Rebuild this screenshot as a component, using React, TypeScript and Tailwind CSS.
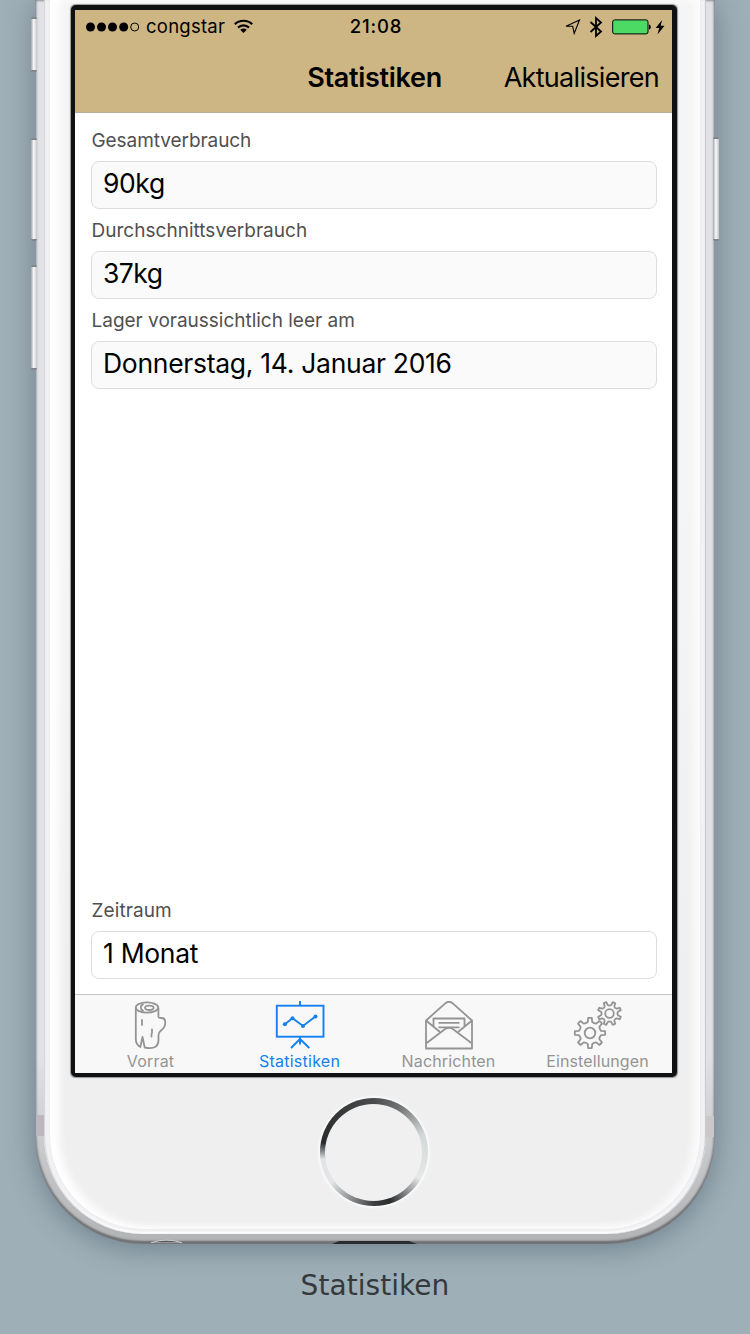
import type { ReactNode } from "react";

const gearPath = (cx: number, cy: number, outer: number, inner: number, teeth: number, turn = 0) => {
  const step = (Math.PI * 2) / teeth;
  const at = (r: number, a: number) =>
    `${(cx + r * Math.cos(a)).toFixed(2)} ${(cy + r * Math.sin(a)).toFixed(2)}`;
  let d = "";
  for (let i = 0; i < teeth; i++) {
    const a = i * step + turn;
    d += `${i === 0 ? "M" : "L"}${at(inner, a - step * 0.25)}`;
    d += `L${at(outer, a - step * 0.15)}A${outer} ${outer} 0 0 1 ${at(outer, a + step * 0.15)}`;
    d += `L${at(inner, a + step * 0.25)}Q${at(inner - 1.2, a + step * 0.5)} ${at(inner, a + step * 0.75)}`;
  }
  return d + "Z";
};

const LogIcon = () => (
  <svg width="50" height="50" viewBox="0 0 50 50" fill="none" stroke="currentColor" strokeWidth="1.8" strokeLinejoin="round" strokeLinecap="round">
    <ellipse cx="21" cy="6.500" rx="11.200" ry="5.200" />
    <ellipse cx="23.300" cy="6.800" rx="4.300" ry="2.200" />
    <path d="M17 3.300c-3 1.900-3 4.700 0 6.500" />
    <path d="M9.800 7V38c0 4 1 6 4.500 8l2.200-10 2.200 10.500c5 1.200 8.500.8 11.200-1 2-1.500 2.600-3.500 2.600-6.500V34c0-2 .6-3 2.500-4.500 2.500-2 4.300-4.500 4.300-8 0-2.500-1.500-4.500-4-4.500-2 0-2.900 0-2.900-2V7" />
    <path d="M16 19v5M26 28.500v3.500M25.500 33v2.500" />
  </svg>
);

const BoardIcon = () => (
  <svg width="50" height="50" viewBox="0 0 50 50" fill="none" stroke="currentColor" strokeWidth="1.900">
    <rect x="1.800" y="4.700" width="46.700" height="31" />
    <path d="M25 0v4.500M25 36v7.500M25 38l-9 9M25 38l9.300 9" />
    <path d="M9.800 23.200l7.700-6 10.500 7.700 12.500-9.500" />
    <g fill="currentColor" stroke="none">
      <circle cx="9.800" cy="23.200" r="2" />
      <circle cx="17.500" cy="17.200" r="2" />
      <circle cx="28" cy="24.900" r="2" />
      <circle cx="40.500" cy="15.400" r="2" />
    </g>
  </svg>
);

const MailIcon = () => (
  <svg width="50" height="50" viewBox="0 0 50 50" fill="none" stroke="currentColor" strokeWidth="1.800" strokeLinejoin="round">
    <path d="M2 19.500 21.500 2.200c2.400-2 4.600-2 7 0L48 19.500v28H2Z" />
    <path d="M2 19.500 16 31M48 19.500 34 31M9.500 25V17.500h31V25" />
    <path d="M2 42.500 20.500 28.500c3-2.200 6-2.200 9 0L48 42.500" />
    <path d="M14.500 21.800h21M14.500 26.300h21" />
  </svg>
);

const GearsIcon = () => (
  <svg width="50" height="50" viewBox="0 0 50 50" fill="none" stroke="currentColor" strokeWidth="1.800" strokeLinejoin="round">
    <path d={gearPath(36.500, 12.500, 11.700, 8.600, 8, Math.PI / 8)} />
    <circle cx="36.500" cy="12.500" r="4.300" />
    <path className="fill-[#f8f8f8]" d={gearPath(17, 32, 15.200, 11.300, 8)} />
    <circle cx="17" cy="32" r="5.300" />
  </svg>
);

const Tab = ({ label, active, tracking, children }: { label: string; active?: boolean; tracking: string; children: ReactNode }) => (
  <div className={`flex w-[149px] flex-col items-center pt-[6px] ${active ? "text-[#1580f0]" : "text-[#949494]"}`}>
    {children}
    <span className={`text-[16px] leading-5 whitespace-nowrap ${tracking}`}>{label}</span>
  </div>
);

const Field = ({ label, value, plain, labelTracking, valueTracking }: { label: string; value: string; plain?: boolean; labelTracking: string; valueTracking: string }) => (
  <div className="h-[90px]">
    <div className={`h-[34px] pt-px pl-[0.500px] text-[19px] leading-[26px] text-[#505050] ${labelTracking}`}>{label}</div>
    <div className={`flex h-12 items-center rounded-lg border border-[#dddddd] px-[11px] pb-[3px] text-[26.500px] text-black ${valueTracking} ${plain ? "bg-white" : "bg-[#fafafa]"}`}>
      {value}
    </div>
  </div>
);

const StatusBar = () => (
  <div className="grid h-[33px] grid-cols-[1fr_auto_1fr] items-center pr-[7px] pl-[10px] text-[18.500px]">
    <div className="flex items-center">
      <svg width="56" height="12" viewBox="0 0 56 12">
        <circle cx="5.500" cy="6" r="4.500" />
        <circle cx="16.500" cy="6" r="4.500" />
        <circle cx="27.500" cy="6" r="4.500" />
        <circle cx="38.700" cy="6" r="4.500" />
        <circle cx="49.700" cy="6" r="4" fill="none" stroke="black" />
      </svg>
      <span className="ml-[5px] pt-px tracking-[0.250px]">congstar</span>
      <svg className="ml-[8px] pb-px" width="21" height="16" viewBox="0 0 21 16" fill="none" stroke="black" strokeWidth="2.300">
        <path d="M1.200 5.600a13.500 13.500 0 0 1 18.600 0M4.600 9.200a8.500 8.500 0 0 1 11.800 0" />
        <path d="M10.500 15 7 11.500a5 5 0 0 1 7 0Z" fill="black" stroke="none" />
      </svg>
    </div>
    <span className="pt-px pl-[2px] font-medium tracking-[0.800px]">21:08</span>
    <div className="flex items-center justify-end">
      <svg width="16" height="16" viewBox="0 0 16 16" fill="none" stroke="black" strokeWidth="1.100">
        <path d="M1 7.300 14.500 1 9.200 14.500 7.700 7.300Z" />
      </svg>
      <svg className="ml-[8px]" width="14" height="22" viewBox="0 0 14 22" fill="none" stroke="black" strokeWidth="1.800">
        <path d="M1.500 6 12 15.500 7 20V2l5 4.500L1.500 16" />
      </svg>
      <svg className="ml-[9px]" width="40" height="16" viewBox="0 0 40 16">
        <rect x=".7" y=".9" width="35.300" height="14" rx="2" fill="#4cd964" stroke="black" />
        <path d="M37 5.400c2.400.6 2.400 4.600 0 5.200Z" />
      </svg>
      <svg className="ml-[3px]" width="10" height="16" viewBox="0 0 10 16">
        <path d="M7 1 .7 9h3.500L2.500 15.500 9.500 6.800H5.700Z" />
      </svg>
    </div>
  </div>
);

const Screen = () => (
  <div className="ml-[21px] flex h-[1072px] w-[606px] flex-col overflow-hidden rounded-[5px] border-t-[5px] border-r-[5px] border-b-[4px] border-l-[4px] border-[#101112] bg-white shadow-[0_0_1px_0.500px_rgba(90,90,90,0.600)]">
    <header className="h-[103px] shrink-0 border-b border-[#b5ad9d] bg-[#cdb684] text-black">
      <StatusBar />
      <div className="grid h-[69px] grid-cols-[1fr_auto_1fr] items-center pt-[2px] pr-[13px] pl-[14px] text-[27px]">
        <span />
        <span className="pl-px font-semibold tracking-[-0.300px]">Statistiken</span>
        <span className="text-right tracking-[-0.700px]">Aktualisieren</span>
      </div>
    </header>
    <main className="flex flex-1 flex-col justify-between pt-[14px] pr-[15px] pl-4">
      <div>
        <Field label="Gesamtverbrauch" value="90kg" labelTracking="tracking-[-0.070px]" valueTracking="tracking-[-0.400px]" />
        <Field label="Durchschnittsverbrauch" value="37kg" labelTracking="tracking-[0.020px]" valueTracking="tracking-[-0.500px]" />
        <Field label="Lager voraussichtlich leer am" value="Donnerstag, 14. Januar 2016" labelTracking="tracking-[-0.010px]" valueTracking="tracking-[-0.290px]" />
      </div>
      <div className="pb-[7px]">
        <Field label="Zeitraum" value="1 Monat" plain labelTracking="tracking-[0.100px]" valueTracking="tracking-[-0.300px]" />
      </div>
    </main>
    <nav className="flex h-[79px] shrink-0 border-t border-[#c4c4c4] bg-[#f8f8f8] pl-px">
      <Tab label="Vorrat" tracking="tracking-[0.200px]"><LogIcon /></Tab>
      <Tab label="Statistiken" active tracking="tracking-[0.250px]"><BoardIcon /></Tab>
      <Tab label="Nachrichten" tracking="tracking-[0.150px]"><MailIcon /></Tab>
      <Tab label="Einstellungen" tracking="tracking-[0.120px]"><GearsIcon /></Tab>
    </nav>
  </div>
);

const SideButton = ({ place }: { place: string }) => (
  <div className={`absolute w-[6px] rounded-[2px] border-y-2 border-[#80868b] bg-linear-to-r from-[#a2a6aa] via-[#f8f8fa] via-45% to-[#c5c7cb] ${place}`} />
);

export default function App() {
  return (
    <div className="relative flex h-[1334px] w-[750px] flex-col items-center overflow-hidden bg-[#9fafb7] font-['Inter','Liberation_Sans',sans-serif]">
      <div className="relative h-[1244px] w-[680px] shrink-0 rounded-b-[108px] bg-linear-to-b from-[#e2e2e6] from-85% via-[#c3c4c6] via-94% to-[#b2b3b5] px-[9px] pb-[10px] shadow-[inset_1px_0_3px_#7f8289,inset_-1px_0_3px_#7f8289,inset_0_-3px_2px_#66696c,0_4px_28px_rgba(55,78,95,0.480)]">
        <div className="absolute top-[1115px] left-px h-[21px] w-[8px] bg-[#bbb7bc]" />
        <div className="absolute top-[1116px] right-px h-[21px] w-[8px] bg-[#cac7c9]" />
        <div className="relative h-full rounded-b-[99px] bg-[#f1f1f3] px-[6px] pb-[5px] shadow-[inset_1px_0_1px_#d4d4d9,inset_-1px_0_1px_#c6c6cb,inset_0_-2px_2px_#ffffff]">
          <div className="flex h-full flex-col rounded-b-[94px] bg-linear-to-b from-[#f5f5f5] from-40% to-[#efefef] to-80% pt-[5px] shadow-[inset_9px_-1px_9px_#ffffff,inset_-7px_-1px_7px_#fafafa,0_0_1px_#c6c6c8]">
            <Screen />
            <div className="mt-[21px] ml-[269.500px] h-[108px] w-[108px] rounded-full bg-[conic-gradient(from_0deg,#4b4c4e_0deg,#717375_30deg,#d4d7d8_70deg,#e7e8e8_120deg,#85878a_142deg,#292b2d_162deg,#3c3e40_180deg,#898b8d_205deg,#e3e6e6_235deg,#e2e5e5_262deg,#292b2e_280deg,#38393b_320deg,#4b4c4e_360deg)] p-[5.500px] shadow-[0_0_2px_2px_#fafafa]">
              <div className="h-full rounded-full bg-[#f0f0f0]" />
            </div>
          </div>
        </div>
        <svg className="absolute bottom-px left-[115px]" width="33" height="4" viewBox="0 0 33 4">
          <path d="M1 4C9 .3 24 .3 32 4Z" fill="#55585b" stroke="#d0d1d2" />
        </svg>
        <svg className="absolute bottom-0 left-[297px]" width="86" height="4" viewBox="0 0 86 4">
          <path d="M0 4 7 1H77l8 3Z" fill="#292d30" />
        </svg>
      </div>
      <SideButton place="left-[31px] top-[17px] h-[55px]" />
      <SideButton place="left-[31px] top-[138px] h-[103px]" />
      <SideButton place="left-[31px] top-[265px] h-[105px]" />
      <SideButton place="left-[713px] top-[137px] h-[104px]" />
      <div className="mt-[24px] font-['DejaVu_Sans',sans-serif] text-[28px] leading-9 tracking-[0.050px] text-[#35393b]">Statistiken</div>
    </div>
  );
}
